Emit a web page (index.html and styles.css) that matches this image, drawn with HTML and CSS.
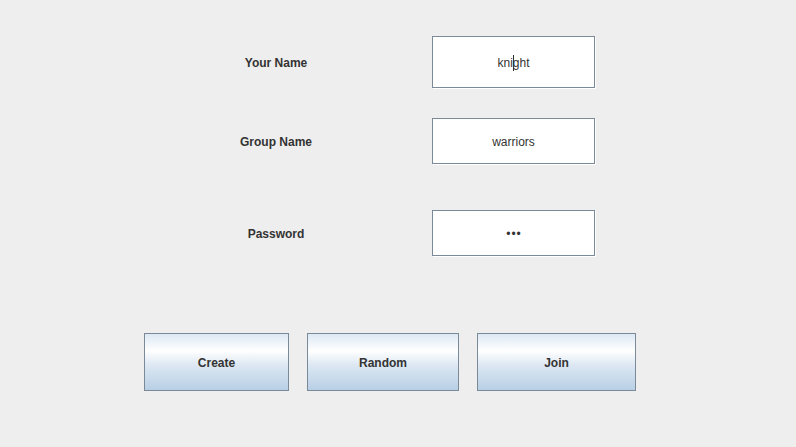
FILE: index.html
```html
<!DOCTYPE html>
<html>
<head>
<meta charset="utf-8">
<link rel="stylesheet" href="styles.css">
</head>
<body>
<div class="form">
  <div class="row row-name">
    <div class="label">Your Name</div>
    <div class="field">kni<span class="caret"></span>ght</div>
  </div>
  <div class="row row-group">
    <div class="label">Group Name</div>
    <div class="field">warriors</div>
  </div>
  <div class="row row-pass">
    <div class="label">Password</div>
    <div class="field dots">•••</div>
  </div>
  <div class="buttons">
    <div class="btn btn-create">Create</div>
    <div class="btn btn-random">Random</div>
    <div class="btn btn-join">Join</div>
  </div>
</div>
</body>
</html>
```
FILE: styles.css
```css
html, body {
  margin: 0;
  padding: 0;
  background: #eeeeee;
  width: 796px;
  height: 447px;
  overflow: hidden;
  font-family: "Liberation Sans", Arial, sans-serif;
  font-size: 12px;
  color: #333333;
}
.form {
  padding-top: 36px;
}
.row {
  display: flex;
  align-items: center;
  padding-left: 200px;
}
.row-name { height: 52px; margin-bottom: 30px; }
.row-group { height: 46px; margin-bottom: 46px; }
.row-pass { height: 46px; }
.label {
  width: 152px;
  margin-right: 80px;
  padding-top: 2px;
  text-align: center;
  font-weight: bold;
}
.field {
  box-sizing: border-box;
  width: 163px;
  height: 100%;
  padding-top: 2px;
  background: #ffffff;
  border: 1px solid #7a8a99;
  box-shadow: 1px 1px 0 #ffffff;
  display: flex;
  align-items: center;
  justify-content: center;
  color: #333333;
}
.caret {
  display: inline-block;
  width: 1px;
  height: 16px;
  background: #333333;
  margin-right: -1px;
  align-self: center;
}
.dots {
  font-size: 12px;
  letter-spacing: 1px;
  padding-left: 1px;
}
.buttons {
  display: flex;
  gap: 18px;
  padding-left: 144px;
  margin-top: 77px;
}
.btn {
  box-sizing: border-box;
  height: 58px;
  padding-top: 2px;
  border: 1px solid #7a8a99;
  background: linear-gradient(to bottom, #dde8f3 0%, #ffffff 30%, #dde8f3 55%, #b8cfe5 100%);
  display: flex;
  align-items: center;
  justify-content: center;
  font-weight: bold;
  color: #333333;
}
.btn-create { width: 145px; }
.btn-random { width: 152px; }
.btn-join { width: 159px; }
```
